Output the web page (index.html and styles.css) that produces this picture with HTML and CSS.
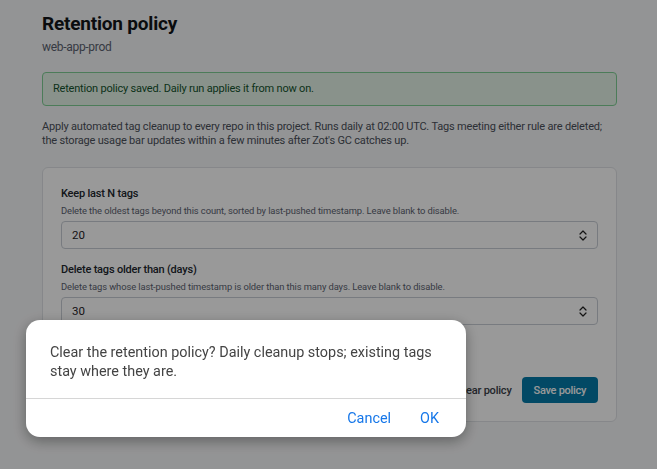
FILE: index.html
```html
<!DOCTYPE html>
<html lang="en">
  <head>
    <meta charset="UTF-8" />
    <meta name="viewport" content="width=device-width, initial-scale=1.0" />
    <title>Retention policy</title>
    <link rel="stylesheet" href="styles.css">
  </head>
  <body>
    <main class="page">
      <h1 class="title">Retention policy</h1>
      <p class="subtitle">web-app-prod</p>

      <div class="alert">Retention policy saved. Daily run applies it from now on.</div>

      <p class="intro">
        Apply automated tag cleanup to every repo in this project. Runs daily at 02:00 UTC. Tags meeting either rule are deleted;
        the storage usage bar updates within a few minutes after Zot's GC catches up.
      </p>

      <form class="card">
        <label class="field-label" for="keep">Keep last N tags</label>
        <p class="help">Delete the oldest tags beyond this count, sorted by last-pushed timestamp. Leave blank to disable.</p>
        <div class="number">
          <input id="keep" type="text" value="20" />
          <svg class="spin" width="8" height="13" viewBox="0 0 8 13">
            <path d="M1 5l3-3 3 3M1 8l3 3 3-3" fill="none" stroke="#222" stroke-width="1.2" stroke-linecap="round" stroke-linejoin="round" />
          </svg>
        </div>

        <label class="field-label second" for="days">Delete tags older than (days)</label>
        <p class="help">Delete tags whose last-pushed timestamp is older than this many days. Leave blank to disable.</p>
        <div class="number">
          <input id="days" type="text" value="30" />
          <svg class="spin" width="8" height="13" viewBox="0 0 8 13">
            <path d="M1 5l3-3 3 3M1 8l3 3 3-3" fill="none" stroke="#222" stroke-width="1.2" stroke-linecap="round" stroke-linejoin="round" />
          </svg>
        </div>

        <div class="actions">
          <button type="button" class="btn-text">Clear policy</button>
          <button type="button" class="btn-save">Save policy</button>
        </div>
      </form>
    </main>

    <div class="overlay"></div>

    <section class="dialog">
      <p class="dialog-msg">Clear the retention policy? Daily cleanup stops; existing tags stay where they are.</p>
      <div class="dialog-actions">
        <button class="dialog-btn">Cancel</button>
        <button class="dialog-btn">OK</button>
      </div>
    </section>
  </body>
</html>
```

FILE: styles.css
```css
body {
  margin: 0;

  background-color: #f6f7f8;

  font-family: Roboto, "Noto Sans", sans-serif;

  color: #1f2328;
}

.page {
  width: 575px;

  padding: 12px 0 0 42px;
}

.title {
  margin: 0;

  font-size: 19px;

  line-height: 24px;

  font-weight: 700;

  letter-spacing: -0.2px;

  color: #111418;
}

.subtitle {
  margin: 4px 0 0;

  font-size: 12px;

  line-height: 14px;

  letter-spacing: -0.3px;

  color: #5b6270;
}

.alert {
  margin-top: 18px;

  height: 32px;

  padding: 0 10px;

  line-height: 32px;

  font-size: 11px;

  letter-spacing: -0.2px;

  color: #14532d;

  background-color: #e4f3e8;

  border: 1px solid #7fcf95;

  border-radius: 4px;
}

.intro {
  margin: 14px 0 0;

  font-size: 11px;

  line-height: 14px;

  letter-spacing: -0.18px;

  color: #4a505a;
}

.card {
  display: flex;

  flex-direction: column;

  margin-top: 19px;

  padding: 18px 18px 18px;

  background-color: #ffffff;

  border: 1px solid #dfe2e6;

  border-radius: 6px;
}

.field-label {
  font-size: 11px;

  line-height: 16px;

  font-weight: 500;

  letter-spacing: -0.2px;

  color: #22272e;
}

.field-label.second {
  margin-top: 13px;
}

.help {
  margin: 2px 0 0;

  font-size: 9.4px;

  line-height: 14px;

  letter-spacing: -0.1px;

  color: #5b6270;
}

.number {
  position: relative;

  margin-top: 3px;
}

.number input {
  box-sizing: border-box;

  width: 100%;

  height: 28px;

  padding: 0 10px;

  font-family: inherit;

  font-size: 11.5px;

  color: #1f2328;

  background: #fff;

  border: 1px solid #c9ced5;

  border-radius: 4px;
}

.spin {
  position: absolute;

  right: 11px;

  top: 8px;
}

.actions {
  display: flex;

  justify-content: flex-end;

  align-items: center;

  gap: 10px;

  margin-top: 52px;
}

button {
  cursor: pointer;

  border: none;

  font-family: inherit;
}

.btn-text {
  background: none;

  padding: 0;

  font-size: 11px;

  font-weight: 500;

  letter-spacing: -0.2px;

  color: #3a4048;
}

.btn-save {
  height: 26px;

  padding: 0 12px;

  font-size: 11px;

  font-weight: 500;

  letter-spacing: -0.3px;

  color: #fff;

  background-color: #047ba9;

  border-radius: 4px;
}

.overlay {
  position: fixed;

  top: 0;

  left: 0;

  right: 0;

  bottom: 0;

  background: rgba(0, 0, 0, 0.4);
}

.dialog {
  position: fixed;

  left: 26px;

  top: 320px;

  width: 440px;

  height: 117px;

  display: flex;

  flex-direction: column;

  background: #fff;

  border-radius: 14px;

  box-shadow: 0 4px 14px rgba(0, 0, 0, 0.35);

  font-family: Roboto, "Liberation Sans", sans-serif;
}

.dialog-msg {
  margin: 0;

  padding: 23px 24px 17px;

  font-size: 14.4px;

  line-height: 19px;

  color: #444;

  border-bottom: 1px solid #d6d6d6;
}

.dialog-actions {
  flex: 1;

  display: flex;

  justify-content: flex-end;

  align-items: center;

  gap: 29px;

  padding: 0 27px 0 0;
}

.dialog-btn {
  background: none;

  padding: 0;

  font-family: inherit;

  font-size: 14.4px;

  color: #1677e9;
}
```
